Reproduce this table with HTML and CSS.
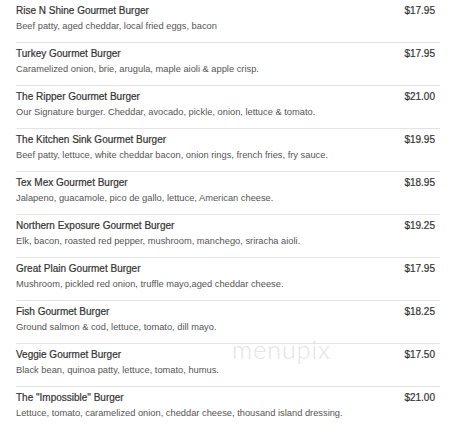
FILE: index.html
```html
<!DOCTYPE html>
<html>
<head>
<meta charset="utf-8">
<link rel="stylesheet" href="styles.css">
</head>
<body>
<div class="menu">
  <div class="item">
    <div class="info"><div class="name">Rise N Shine Gourmet Burger</div><div class="desc">Beef patty, aged cheddar, local fried eggs, bacon</div></div>
    <div class="price">$17.95</div>
  </div>
  <div class="item">
    <div class="info"><div class="name">Turkey Gourmet Burger</div><div class="desc">Caramelized onion, brie, arugula, maple aioli &amp; apple crisp.</div></div>
    <div class="price">$17.95</div>
  </div>
  <div class="item">
    <div class="info"><div class="name">The Ripper Gourmet Burger</div><div class="desc">Our Signature burger. Cheddar, avocado, pickle, onion, lettuce &amp; tomato.</div></div>
    <div class="price">$21.00</div>
  </div>
  <div class="item">
    <div class="info"><div class="name">The Kitchen Sink Gourmet Burger</div><div class="desc">Beef patty, lettuce, white cheddar bacon, onion rings, french fries, fry sauce.</div></div>
    <div class="price">$19.95</div>
  </div>
  <div class="item">
    <div class="info"><div class="name">Tex Mex Gourmet Burger</div><div class="desc">Jalapeno, guacamole, pico de gallo, lettuce, American cheese.</div></div>
    <div class="price">$18.95</div>
  </div>
  <div class="item">
    <div class="info"><div class="name">Northern Exposure Gourmet Burger</div><div class="desc">Elk, bacon, roasted red pepper, mushroom, manchego, sriracha aioli.</div></div>
    <div class="price">$19.25</div>
  </div>
  <div class="item">
    <div class="info"><div class="name">Great Plain Gourmet Burger</div><div class="desc">Mushroom, pickled red onion, truffle mayo,aged cheddar cheese.</div></div>
    <div class="price">$17.95</div>
  </div>
  <div class="item">
    <div class="info"><div class="name">Fish Gourmet Burger</div><div class="desc">Ground salmon &amp; cod, lettuce, tomato, dill mayo.</div></div>
    <div class="price">$18.25</div>
  </div>
  <div class="item">
    <div class="info"><div class="name">Veggie Gourmet Burger</div><div class="desc">Black bean, quinoa patty, lettuce, tomato, humus.</div></div>
    <div class="price">$17.50</div>
  </div>
  <div class="item last">
    <div class="info"><div class="name">The "Impossible" Burger</div><div class="desc">Lettuce, tomato, caramelized onion, cheddar cheese, thousand island dressing.</div></div>
    <div class="price">$21.00</div>
  </div>
  <div class="watermark">menupix</div>
</div>
</body>
</html>
```
FILE: styles.css
```css
html, body {
  margin: 0;
  padding: 0;
  background: #fff;
}
body {
  font-family: "Liberation Sans", Arial, sans-serif;
}
.menu {
  position: relative;
  margin-left: 16px;
  width: 424px;
}
.item {
  display: flex;
  justify-content: space-between;
  align-items: flex-start;
  height: 42px;
  border-bottom: 1px solid #e3e3e3;
  box-sizing: content-box;
}
.item.last {
  border-bottom: none;
}
.info {
  padding-top: 3px;
}
.name {
  font-size: 10px;
  font-weight: normal;
  -webkit-text-stroke: 0.2px #333;
  line-height: 15px;
  color: #333;
}
.desc {
  font-size: 9.3px;
  line-height: 15px;
  margin-top: 1px;
  color: #555;
}
.price {
  font-size: 10px;
  font-weight: normal;
  -webkit-text-stroke: 0.2px #333;
  line-height: 15px;
  padding-top: 3px;
  padding-right: 5px;
  color: #333;
}
.watermark {
  position: absolute;
  left: 216px;
  top: 334px;
  font-family: "Lato", sans-serif;
  font-weight: 300;
  font-size: 25px;
  letter-spacing: 1px;
  color: #e4e4e4;
}
```
